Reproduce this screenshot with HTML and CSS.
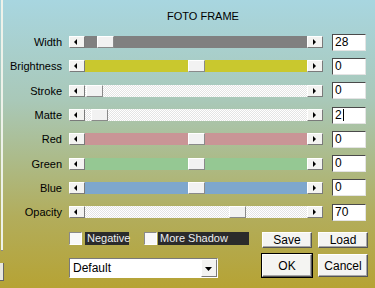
FILE: index.html
```html
<!DOCTYPE html>
<html lang="en">
<head>
  <meta charset="UTF-8" />
  <meta name="viewport" content="width=device-width, initial-scale=1.0" />
  <title>Foto Frame</title>
  <link rel="stylesheet" href="styles.css">
</head>
<body>
  <div class="edge"></div>
  <div class="edge-button"></div>

  <h1>FOTO FRAME</h1>

  <div class="rows">
    <div class="row">
      <label>Width</label>
      <div class="slider">
        <span class="arrow"><svg width="14" height="10"><polygon points="4,5 7,2 7,8" /></svg></span>
        <div class="track gray"><span class="thumb" style="left: 12px"></span></div>
        <span class="arrow"><svg width="14" height="10"><polygon points="8,5 5,2 5,8" /></svg></span>
      </div>
      <div class="value">28</div>
    </div>

    <div class="row">
      <label>Brightness</label>
      <div class="slider">
        <span class="arrow"><svg width="14" height="10"><polygon points="4,5 7,2 7,8" /></svg></span>
        <div class="track yellow"><span class="thumb" style="left: 103px"></span></div>
        <span class="arrow"><svg width="14" height="10"><polygon points="8,5 5,2 5,8" /></svg></span>
      </div>
      <div class="value">0</div>
    </div>

    <div class="row">
      <label>Stroke</label>
      <div class="slider">
        <span class="arrow"><svg width="14" height="10"><polygon points="4,5 7,2 7,8" /></svg></span>
        <div class="track white"><span class="thumb" style="left: 1px"></span></div>
        <span class="arrow"><svg width="14" height="10"><polygon points="8,5 5,2 5,8" /></svg></span>
      </div>
      <div class="value">0</div>
    </div>

    <div class="row">
      <label>Matte</label>
      <div class="slider">
        <span class="arrow"><svg width="14" height="10"><polygon points="4,5 7,2 7,8" /></svg></span>
        <div class="track white"><span class="thumb" style="left: 6px"></span></div>
        <span class="arrow"><svg width="14" height="10"><polygon points="8,5 5,2 5,8" /></svg></span>
      </div>
      <div class="value">2<span class="caret"></span></div>
    </div>

    <div class="row">
      <label>Red</label>
      <div class="slider">
        <span class="arrow"><svg width="14" height="10"><polygon points="4,5 7,2 7,8" /></svg></span>
        <div class="track red"><span class="thumb" style="left: 103px"></span></div>
        <span class="arrow"><svg width="14" height="10"><polygon points="8,5 5,2 5,8" /></svg></span>
      </div>
      <div class="value">0</div>
    </div>

    <div class="row">
      <label>Green</label>
      <div class="slider">
        <span class="arrow"><svg width="14" height="10"><polygon points="4,5 7,2 7,8" /></svg></span>
        <div class="track green"><span class="thumb" style="left: 103px"></span></div>
        <span class="arrow"><svg width="14" height="10"><polygon points="8,5 5,2 5,8" /></svg></span>
      </div>
      <div class="value">0</div>
    </div>

    <div class="row">
      <label>Blue</label>
      <div class="slider">
        <span class="arrow"><svg width="14" height="10"><polygon points="4,5 7,2 7,8" /></svg></span>
        <div class="track blue"><span class="thumb" style="left: 103px"></span></div>
        <span class="arrow"><svg width="14" height="10"><polygon points="8,5 5,2 5,8" /></svg></span>
      </div>
      <div class="value">0</div>
    </div>

    <div class="row">
      <label>Opacity</label>
      <div class="slider">
        <span class="arrow"><svg width="14" height="10"><polygon points="4,5 7,2 7,8" /></svg></span>
        <div class="track white"><span class="thumb" style="left: 144px"></span></div>
        <span class="arrow"><svg width="14" height="10"><polygon points="8,5 5,2 5,8" /></svg></span>
      </div>
      <div class="value">70</div>
    </div>
  </div>

  <div class="bottom">
    <div class="options">
      <div class="checks">
        <span class="check"></span><span class="check-label first">Negative</span>
        <span class="check second"></span><span class="check-label wide">More Shadow</span>
      </div>
      <div class="select">
        <span class="select-text">Default</span>
        <span class="select-arrow"><svg width="14" height="17"><polygon points="3,7 10,7 6.5,11" /></svg></span>
      </div>
    </div>
    <div class="buttons">
      <button>Save</button>
      <button>Load</button>
      <button class="default">OK</button>
      <button>Cancel</button>
    </div>
  </div>
</body>
</html>
```

FILE: styles.css
```css
* {
  box-sizing: border-box;
}

body {
  margin: 0;
  width: 375px;
  height: 288px;
  padding-top: 10px;
  overflow: hidden;
  position: relative;
  font-family: 'Liberation Sans', Arial, sans-serif;
  font-size: 11px;
  color: #000;
  background: linear-gradient(#a8d6e0 0%, #a9c8b8 35%, #acbb8a 55%, #b2ad5c 75%, #b6a334 100%);
}

/* edge of the window behind */
.edge {
  position: absolute;
  left: 1px;
  top: 0;
  width: 2px;
  height: 251px;
  background: #eef2ea;
  border-bottom: 1px solid #8a8a80;
}

.edge-button {
  position: absolute;
  left: 0;
  top: 263px;
  width: 4px;
  height: 18px;
  background: #e8e8e0;
  border-right: 1px solid #666;
  border-bottom: 1px solid #666;
}

h1 {
  margin: 0;
  height: 13px;
  line-height: 13px;
  padding-left: 167px;
  font-size: 11px;
  font-weight: normal;
}

.rows {
  margin-top: 7px;
}

.row {
  height: 24.3px;
  display: grid;
  grid-template-columns: 62px 254px 36px;
  column-gap: 7px;
  align-items: center;
}

.row label {
  text-align: right;
}

.row .value {
  margin-left: 2px;
}

.slider {
  display: flex;
  height: 12px;
}

.arrow {
  width: 16px;
  height: 12px;
  background: #f3f3f1;
  border: 1px solid;
  border-color: #fff #7a7a7a #7a7a7a #fff;
  display: flex;
}

.arrow svg {
  fill: #000;
}

.track {
  flex: 1;
  position: relative;
}

.track.gray {
  background: #808080;
}

.track.yellow {
  background: #c9c82e;
}

.track.red {
  background: #c99596;
}

.track.green {
  background: #95c893;
}

.track.blue {
  background: #7ea7cd;
}

.track.white {
  background-color: #fff;
  background-image: repeating-conic-gradient(#e4e4e4 0 25%, #fff 0 50%);
  background-size: 2px 2px;
}

.thumb {
  position: absolute;
  top: 0;
  width: 17px;
  height: 12px;
  background: #f2f2f2;
  border: 1px solid;
  border-color: #fff #8a8a8a #8a8a8a #fff;
}

.value {
  height: 17px;
  line-height: 15px;
  padding-left: 2px;
  font-size: 12px;
  background: #fff;
  border: 1px solid;
  border-color: #4a4a4a #e4e4e4 #e4e4e4 #4a4a4a;
}

.caret {
  display: inline-block;
  width: 1px;
  height: 12px;
  margin-left: 1px;
  vertical-align: -2px;
  background: #000;
}

.bottom {
  margin-top: 8px;
  padding-left: 69px;
  display: flex;
}

.options {
  width: 193px;
}

.checks {
  display: flex;
  height: 13px;
}

.check {
  width: 13px;
  height: 13px;
  background: #f8f8f8;
  border: 1px solid;
  border-color: #8a8a8a #fff #fff #8a8a8a;
}

.check.second {
  margin-left: 15px;
}

.check-label {
  height: 13px;
  line-height: 13px;
  padding-left: 2px;
  font-size: 11px;
  color: #eee;
  background: #2b2b2b;
}

.check-label.first {
  margin-left: 3px;
  width: 44px;
}

.check-label.wide {
  margin-left: 1px;
  width: 91px;
}

.select {
  margin-top: 13px;
  width: 149px;
  height: 20px;
  display: flex;
  background: #fff;
  border: 1px solid;
  border-color: #7a7a7a #fff #fff #7a7a7a;
}

.select-text {
  flex: 1;
  line-height: 18px;
  padding-left: 3px;
  font-size: 12px;
}

.select-arrow {
  width: 16px;
  height: 18px;
  background: #f3f3f1;
  border: 1px solid;
  border-color: #fff #7a7a7a #7a7a7a #fff;
}

.select-arrow svg {
  fill: #000;
}

.buttons {
  display: grid;
  grid-template-columns: 50px 50px;
  grid-template-rows: 16px 23px;
  column-gap: 6px;
  row-gap: 6px;
}

.buttons button {
  margin: 0;
  padding: 0;
  font-family: 'Liberation Sans', Arial, sans-serif;
  font-size: 12px;
  color: #000;
  background: #f4f4f2;
  border: 1px solid;
  border-color: #fff #555 #555 #fff;
  box-shadow: inset -1px -1px #a8a8a8;
}

.buttons button.default {
  outline: 1px solid #000;
}
```
